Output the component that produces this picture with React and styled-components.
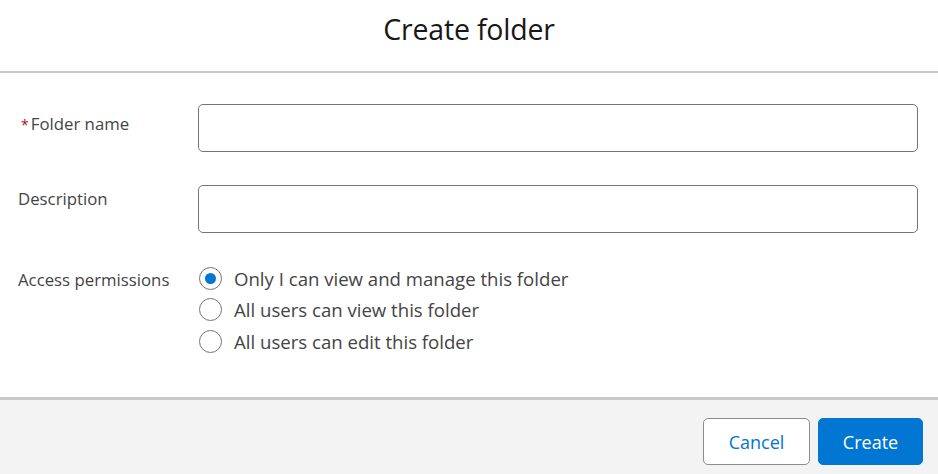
import React, { useState } from "react";
import styled, { createGlobalStyle } from "styled-components";

const Global = createGlobalStyle`
  html, body { margin: 0; padding: 0; background: #ffffff; }
  body { font-family: "Open Sans", "Noto Sans", Arial, sans-serif; color: #181818; }
  * { box-sizing: border-box; }
`;

const Modal = styled.div`
  width: 938px;
  height: 474px;
  display: flex;
  flex-direction: column;
  background: #ffffff;
`;

const Header = styled.header`
  height: 73px;
  flex: none;
  display: flex;
  align-items: center;
  justify-content: center;
  border-bottom: 2px solid #c9c9c9;
  padding-bottom: 14px;
`;

const Title = styled.h1`
  margin: 0;
  font-size: 28.5px;
  font-weight: 400;
  color: #181818;
  letter-spacing: -0.2px;
`;

const Body = styled.div`
  flex: 1;
  padding: 31px 20px 0 18px;
  display: flex;
  flex-direction: column;
  gap: 33px;
`;

const Row = styled.div`
  display: grid;
  grid-template-columns: 180px 1fr;
  align-items: start;
`;

const Label = styled.label`
  font-size: 16.8px;
  color: #444444;
  padding-top: ${(p) => p.$offset}px;
  line-height: 22px;
  display: flex;
  align-items: baseline;
`;

const Required = styled.abbr`
  color: #ba0517;
  text-decoration: none;
  font-size: 14px;
  margin: 0 2px 0 3px;
`;

const Input = styled.input`
  width: 100%;
  height: 48px;
  border: 1px solid #747474;
  border-radius: 5px;
  background: #ffffff;
  padding: 0 12px;
  font: inherit;
  font-size: 16px;
  outline: none;
`;

const RadioGroup = styled.div`
  display: flex;
  flex-direction: column;
  gap: 7.5px;
`;

const RadioRow = styled.label`
  display: flex;
  align-items: center;
  gap: 12px;
  height: 24px;
  font-size: 18.6px;
  color: #444444;
  cursor: pointer;
`;

const Circle = styled.span`
  width: 23px;
  height: 23px;
  margin-left: 1px;
  border-radius: 50%;
  border: 1px solid #747474;
  background: #ffffff;
  display: flex;
  align-items: center;
  justify-content: center;
  flex: none;

  &::after {
    content: "";
    width: 11px;
    height: 11px;
    border-radius: 50%;
    background: ${(p) => (p.$checked ? "#0176d3" : "transparent")};
  }
`;

const Footer = styled.footer`
  height: 77px;
  flex: none;
  background: #f3f3f3;
  border-top: 3px solid #c9c9c9;
  display: flex;
  justify-content: flex-end;
  align-items: flex-start;
  gap: 8px;
  padding: 18px 15px 0 0;
`;

const Button = styled.button`
  height: 47px;
  min-width: ${(p) => p.$width}px;
  border-radius: 5px;
  font: inherit;
  font-size: 18px;
  padding: 0 20px;
  cursor: pointer;
  border: 1px solid ${(p) => (p.$primary ? "#0176d3" : "#8c8c8c")};
  background: ${(p) => (p.$primary ? "#0176d3" : "#ffffff")};
  color: ${(p) => (p.$primary ? "#ffffff" : "#0176d3")};
`;

const options = [
  "Only I can view and manage this folder",
  "All users can view this folder",
  "All users can edit this folder",
];

export default function App() {
  const [access, setAccess] = useState(0);
  return (
    <Modal>
      <Global />
      <Header>
        <Title>Create folder</Title>
      </Header>
      <Body>
        <Row>
          <Label $offset={9}>
            <Required title="required">*</Required>Folder name
          </Label>
          <Input />
        </Row>
        <Row>
          <Label $offset={3}>Description</Label>
          <Input />
        </Row>
        <Row>
          <Label $offset={3}>Access permissions</Label>
          <RadioGroup>
            {options.map((o, i) => (
              <RadioRow key={o} onClick={() => setAccess(i)}>
                <Circle $checked={access === i} />
                {o}
              </RadioRow>
            ))}
          </RadioGroup>
        </Row>
      </Body>
      <Footer>
        <Button $width={107}>Cancel</Button>
        <Button $primary $width={105}>Create</Button>
      </Footer>
    </Modal>
  );
}
